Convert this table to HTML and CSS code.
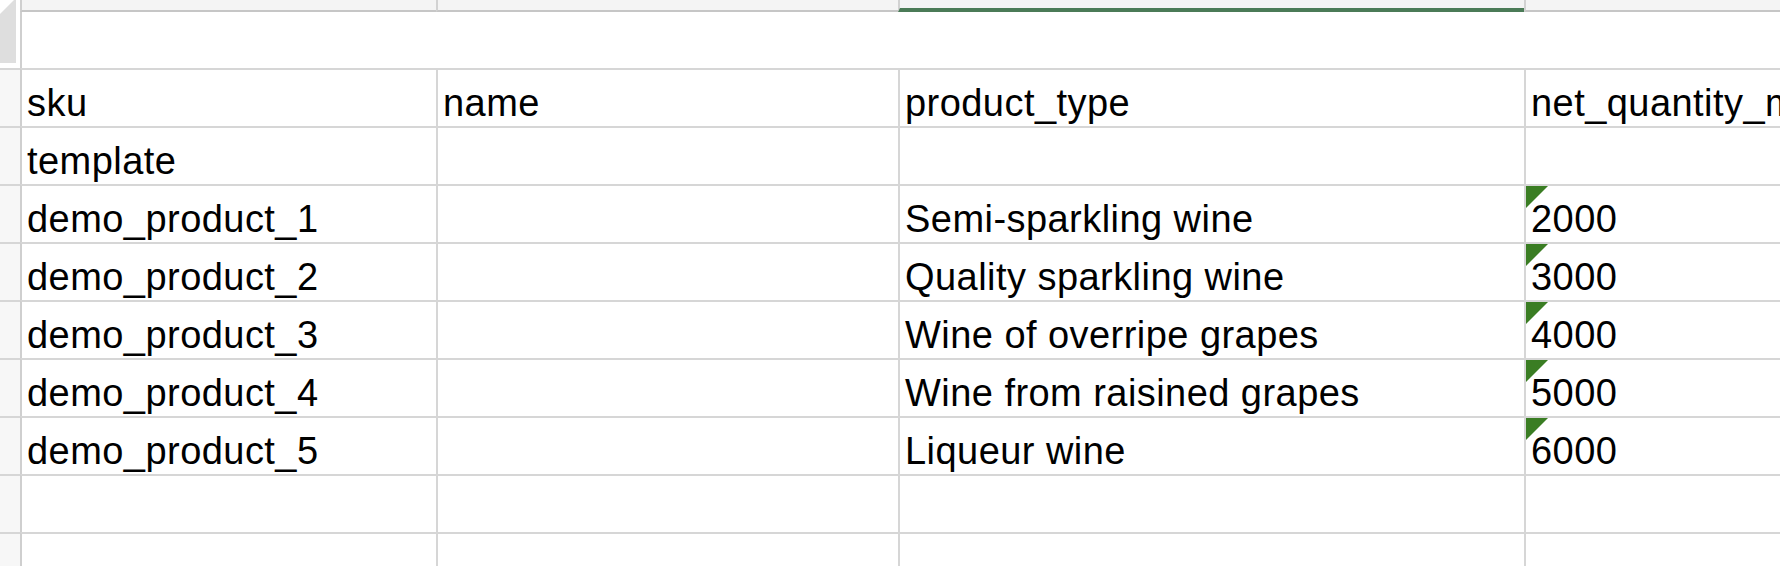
FILE: index.html
```html
<!DOCTYPE html>
<html lang="en">
<head>
<meta charset="utf-8">
<title>Sheet</title>
<link rel="stylesheet" href="styles.css">
</head>
<body>
<div class="sheet">
  <div class="corner"></div>
  <div class="ch ch-first"></div>
  <div class="ch"></div>
  <div class="ch ch-sel"></div>
  <div class="ch"></div>

  <div class="row1"></div>

  <div class="rh"></div>
  <div class="c c-first">sku</div>
  <div class="c">name</div>
  <div class="c">product_type</div>
  <div class="c">net_quantity_ml</div>

  <div class="rh"></div>
  <div class="c c-first">template</div>
  <div class="c"></div>
  <div class="c"></div>
  <div class="c"></div>

  <div class="rh"></div>
  <div class="c c-first">demo_product_1</div>
  <div class="c"></div>
  <div class="c">Semi-sparkling wine</div>
  <div class="c flag">2000</div>

  <div class="rh"></div>
  <div class="c c-first">demo_product_2</div>
  <div class="c"></div>
  <div class="c">Quality sparkling wine</div>
  <div class="c flag">3000</div>

  <div class="rh"></div>
  <div class="c c-first">demo_product_3</div>
  <div class="c"></div>
  <div class="c">Wine of overripe grapes</div>
  <div class="c flag">4000</div>

  <div class="rh"></div>
  <div class="c c-first">demo_product_4</div>
  <div class="c"></div>
  <div class="c">Wine from raisined grapes</div>
  <div class="c flag">5000</div>

  <div class="rh"></div>
  <div class="c c-first">demo_product_5</div>
  <div class="c"></div>
  <div class="c">Liqueur wine</div>
  <div class="c flag">6000</div>

  <div class="rh"></div>
  <div class="c c-first"></div>
  <div class="c"></div>
  <div class="c"></div>
  <div class="c"></div>

  <div class="rh"></div>
  <div class="c c-first"></div>
  <div class="c"></div>
  <div class="c"></div>
  <div class="c"></div>
</div>
</body>
</html>
```

FILE: styles.css
```css
html, body {
  margin: 0;
  padding: 0;
  background: #ffffff;
}

body {
  width: 1780px;
  height: 566px;
  overflow: hidden;
  font-family: "Liberation Sans", Arial, Helvetica, sans-serif;
  color: #000000;
}

.sheet {
  display: grid;
  grid-template-columns: 20px 416px 462px 626px 1fr;
  grid-template-rows: 12px 56px repeat(9, 58px);
  width: 1780px;
}

.corner {
  grid-row: 1 / 3;
  grid-column: 1;
  width: 16px;
  height: 63px;
  background: #dedede;
  clip-path: polygon(0 14px, 14px 0, 100% 0, 100% 100%, 0 100%);
}

.ch {
  box-sizing: border-box;
  background: #f4f4f4;
  border-left: 2px solid #d2d2d2;
  border-bottom: 2px solid #c6c6c6;
}

.ch-first {
  grid-column: 2;
  border-left-color: #cfcfcf;
}

.ch-sel {
  border-bottom: 4px solid #4b7b57;
}

.row1 {
  grid-column: 2 / 6;
  border-left: 2px solid #cfcfcf;
  background: #ffffff;
}

.rh {
  box-sizing: border-box;
  grid-column: 1;
  background: #f7f7f7;
  border-top: 2px solid #d6d6d6;
}

.c {
  box-sizing: border-box;
  border-top: 2px solid #d6d6d6;
  border-left: 2px solid #d6d6d6;
  display: flex;
  align-items: flex-end;
  padding: 0 5px 1px 5px;
  font-size: 38px;
  line-height: 44px;
  letter-spacing: 0.45px;
  white-space: nowrap;
  overflow: hidden;
}

.c-first {
  border-left-color: #cfcfcf;
}

.flag {
  position: relative;
}

.flag::before {
  content: "";
  position: absolute;
  top: 0;
  left: 0;
  width: 0;
  height: 0;
  border-top: 22px solid #3a7d23;
  border-right: 22px solid transparent;
}
```
